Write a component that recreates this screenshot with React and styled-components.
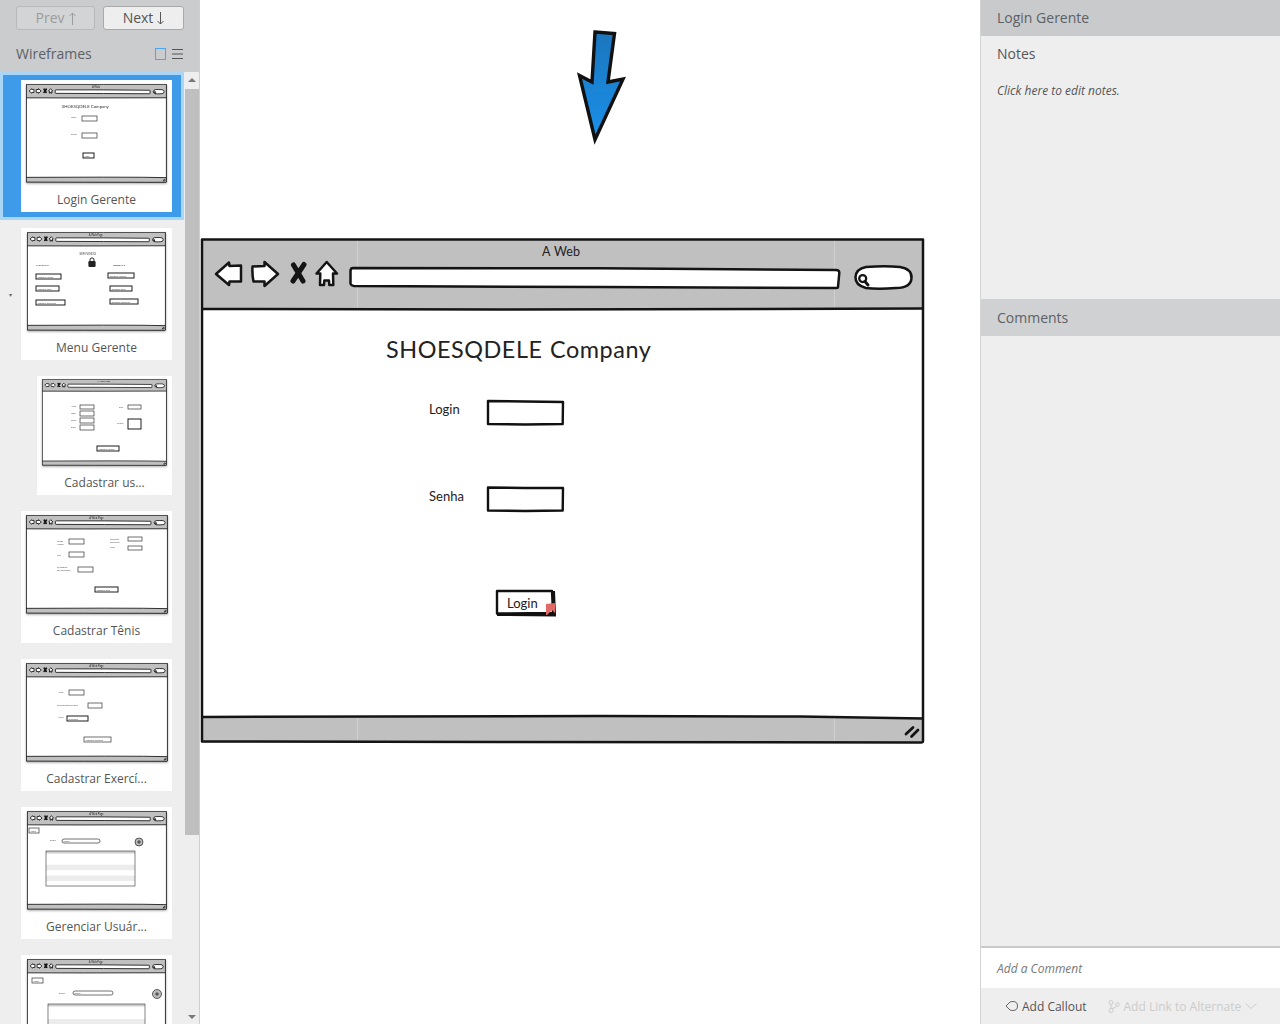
import React from "react";
import styled, { createGlobalStyle } from "styled-components";

// Thumbnail data, coordinates are in thumbnail pixels
const thumbs = [
    {
        name: "Login Gerente",
        title: "A Web",
        w: 141,
        h: 99,
        selected: true,
        texts: [
            { x: 36, y: 23.5, t: "SHOESQDELE Company", s: 4.3, color: "#333" },
            { x: 45, y: 34, t: "Login", s: 2.2 },
            { x: 45, y: 51, t: "Senha", s: 2.2 },
        ],
        boxes: [
            { x: 56, y: 32, w: 15, h: 5 },
            { x: 56, y: 49, w: 15, h: 5 },
            { x: 57, y: 69, w: 11, h: 5, heavy: true, t: "Login" },
        ],
    },
    {
        name: "Menu Gerente",
        title: "A Web Page",
        w: 139,
        h: 99,
        texts: [
            { x: 52.5, y: 23, t: "SEM VINDO", s: 3, color: "#444" },
            { x: 9, y: 34, t: "CADASTRAR", s: 2.2, color: "#222" },
            { x: 86, y: 34, t: "GERENCIAR", s: 2.2, color: "#222" },
        ],
        boxes: [
            { x: 9, y: 42, w: 25, h: 5, heavy: true, t: "Cadastrar usuário" },
            { x: 9, y: 54, w: 23, h: 5, heavy: true, t: "Cadastrar Tênis" },
            { x: 9, y: 68, w: 29, h: 5, heavy: true, t: "Cadastrar Exercícios" },
            { x: 81, y: 41, w: 26, h: 5, heavy: true, t: "Gerenciar usuários" },
            { x: 83, y: 54, w: 22, h: 5, heavy: true, t: "Gerenciar Tênis" },
            { x: 83, y: 67, w: 28, h: 5, heavy: true, t: "Gerenciar exercícios" },
        ],
        lock: { x: 65, y: 31 },
    },
    {
        name: "Cadastrar us...",
        title: "A Web Page",
        w: 125,
        h: 87,
        cardWidth: 135,
        compact: true,
        texts: [
            { x: 29, y: 28, t: "Nome", s: 2 },
            { x: 29, y: 35, t: "Login", s: 2 },
            { x: 29, y: 42, t: "Senha", s: 2 },
            { x: 29, y: 49, t: "Email", s: 2 },
            { x: 77, y: 29, t: "Data", s: 2 },
            { x: 75, y: 45, t: "Função", s: 2 },
        ],
        boxes: [
            { x: 38, y: 26, w: 14, h: 4 },
            { x: 38, y: 32, w: 14, h: 5 },
            { x: 38, y: 39, w: 14, h: 5 },
            { x: 38, y: 46, w: 14, h: 5 },
            { x: 86, y: 26, w: 13, h: 4 },
            { x: 86, y: 40, w: 13, h: 10, heavy: true },
            { x: 55, y: 67, w: 22, h: 5, heavy: true, t: "Cadastrar usuário" },
        ],
    },
    {
        name: "Cadastrar Tênis",
        title: "A Web Page",
        w: 142,
        h: 99,
        texts: [
            { x: 31, y: 27, t: "Código", s: 2 },
            { x: 31, y: 30, t: "Modelo", s: 2 },
            { x: 31, y: 41, t: "Tipo", s: 2 },
            { x: 31, y: 53, t: "Quantidade", s: 2 },
            { x: 31, y: 56, t: "por embalagem", s: 2 },
            { x: 84, y: 25, t: "Tamanhos", s: 2 },
            { x: 84, y: 28, t: "disponíveis", s: 2 },
            { x: 84, y: 33, t: "Preço", s: 2 },
        ],
        boxes: [
            { x: 43, y: 24, w: 15, h: 5 },
            { x: 43, y: 37, w: 15, h: 5 },
            { x: 52, y: 52, w: 15, h: 5 },
            { x: 102, y: 22, w: 14, h: 4 },
            { x: 102, y: 31, w: 14, h: 4 },
            { x: 69, y: 72, w: 23, h: 5, heavy: true, t: "Cadastrar tênis" },
        ],
    },
    {
        name: "Cadastrar Exercí...",
        title: "A Web Page",
        w: 142,
        h: 99,
        texts: [
            { x: 32, y: 30, t: "Nome", s: 2 },
            { x: 31, y: 43, t: "Calorias gastas por hora", s: 2 },
            { x: 32, y: 55, t: "Ativos", s: 2 },
        ],
        boxes: [
            { x: 43, y: 27, w: 15, h: 5 },
            { x: 62, y: 40, w: 14, h: 5 },
            { x: 41, y: 53, w: 21, h: 5, heavy: true, t: "Selecionar" },
            { x: 58, y: 74, w: 27, h: 5, t: "Cadastrar exercício" },
        ],
    },
    {
        name: "Gerenciar Usuár...",
        title: "A Web Page",
        w: 140,
        h: 99,
        texts: [{ x: 23, y: 30, t: "Buscar", s: 2 }],
        boxes: [
            { x: 2, y: 17, w: 10, h: 5, t: "Voltar" },
            { x: 35, y: 28, w: 38, h: 4, round: true, t: "search" },
        ],
        plus: { x: 112, y: 31, r: 4 },
        table: { x: 19, y: 40, w: 89, h: 35, row: 5.4, stripes: [2, 4] },
    },
    {
        // Cut off by the bottom of the list, its label is out of view
        title: "A Web Page",
        w: 139,
        h: 99,
        texts: [{ x: 32, y: 35, t: "Buscar", s: 2 }],
        boxes: [
            { x: 5, y: 19, w: 11, h: 5, t: "Voltar" },
            { x: 46, y: 32, w: 40, h: 4, round: true, t: "search" },
        ],
        plus: { x: 130, y: 35, r: 4.5 },
        table: { x: 21, y: 45, w: 97, h: 45, row: 6, stripes: [2, 4, 6] },
    },
];

const GlobalStyle = createGlobalStyle`
    html, body {
        margin: 0;
        padding: 0;
        height: 100%;
        background: white;
        font-family: "Open Sans", "Liberation Sans", sans-serif;
    }
`;

// Browser chrome of a wireframe, drawn in page coordinates of the main window
const WireChrome = ({ weight = 2.5, title }) => (
    <g fill="none" stroke="#141414" strokeWidth={weight} strokeLinejoin="round">
        <rect x="202" y="239.5" width="721" height="503" fill="#c0c0c0" stroke="none" />
        <path
            d="M202 309 L500 309.6 L923 308.6 L923 717.6 L800 716.6 L600 716 L202 717 Z"
            fill="#fff"
            stroke="none"
        />
        <path d="M357.5 240 V308 M357.5 718 V741 M834.5 240 V308 M834.5 718 V741" stroke="#d0d0d0" strokeWidth="1" />
        <path d="M202 239.5 L600 239.5 L923 239.5 L923 741 Q923 742.5 921 742.5 L500 742 L202 741.5 Z" />
        <path d="M202 309 L500 309.6 L923 308.6" />
        <path d="M202 717 L600 716 L800 716.6 L923 718.5" />
        <g fill="#fff">
            <path d="M216 274 L229 262.5 L229.5 266 L241 265.5 L241 281.5 L229.5 281.5 L229 285 Z" />
            <path d="M252.5 266.5 L264.5 266 L264.5 262 L278 274 L264.5 286 L264.5 281.5 L253.5 281.5 Q252 274 252.5 266.5 Z" />
            <path d="M326.7 262 L337 273.5 L333 273.5 L333.3 285 L329.3 285 L329 280.5 L324.3 280.5 L324 285 L320 285 L320.3 273.5 L316.5 273.5 Z" />
            <path d="M353 268 L600 268.3 L836 270 Q839.5 270 839.3 273 L838 287 Q838 288 836 288 L600 287 L354 286 Q350 285.5 350.5 282 L350.5 271 Q350.5 268 353 268 Z" />
            <path d="M866 267 Q885 265.5 900 267 Q912 269 911.5 278 Q911 288 896 288 Q878 289.5 866 288 Q855 285 855.5 277 Q856 269 866 267 Z" />
        </g>
        <path d="M293.5 265 L303 281 M304 264.5 L293 281" strokeWidth={weight * 2} strokeLinecap="round" />
        <circle cx="862.7" cy="278.5" r="3.5" strokeWidth={weight * 0.9} />
        <path d="M865 281.5 L868 285" strokeWidth={weight * 1.2} strokeLinecap="round" />
        <path d="M906 734 L913 727.5 M911.5 736.5 L918 730" strokeWidth={weight * 1.1} strokeLinecap="round" />
        {title && (
            <text x="560" y="257" textAnchor="middle" fontFamily="Lato, sans-serif" fontSize="14" stroke="none" fill="#222">
                {title}
            </text>
        )}
    </g>
);

// Everything inside one thumbnail, laid out in thumbnail pixels
const ThumbContent = ({ item }) => (
    <g transform={`translate(200 238) scale(${726 / item.w} ${508 / item.h})`} fontFamily="Lato, sans-serif">
        {item.table && (
            <g>
                <rect x={item.table.x} y={item.table.y} width={item.table.w} height={item.table.h} fill="#fff" />
                <rect x={item.table.x} y={item.table.y} width={item.table.w} height="2.5" fill="#cfcfcf" />
                {item.table.stripes.map((i) => (
                    <rect
                        key={i}
                        x={item.table.x}
                        y={item.table.y + 3 + i * item.table.row}
                        width={item.table.w}
                        height={item.table.row}
                        fill="#ececec"
                    />
                ))}
                <rect x={item.table.x} y={item.table.y} width={item.table.w} height={item.table.h} fill="none" stroke="#333" strokeWidth="0.6" />
            </g>
        )}
        {item.boxes.map((b) => (
            <g key={`${b.x}-${b.y}`}>
                <rect
                    x={b.x}
                    y={b.y}
                    width={b.w}
                    height={b.h}
                    rx={b.round ? 2 : 0}
                    fill="#fff"
                    stroke={b.heavy ? "#111" : "#333"}
                    strokeWidth={b.heavy ? 0.95 : 0.7}
                />
                {b.t && (
                    <text x={b.x + 1.5} y={b.y + b.h - 1.3} fontSize="2.1" fill="#444">
                        {b.t}
                    </text>
                )}
            </g>
        ))}
        {item.texts.map((t) => (
            <text key={`${t.x}-${t.y}`} x={t.x} y={t.y} fontSize={t.s} fill={t.color || "#555"}>
                {t.t}
            </text>
        ))}
        {item.lock && (
            <g>
                <circle cx={item.lock.x} cy={item.lock.y - 3} r="2.1" fill="none" stroke="#222" strokeWidth="1" />
                <rect x={item.lock.x - 3.6} y={item.lock.y - 2} width="7.2" height="6" rx="1.2" fill="#222" />
            </g>
        )}
        {item.plus && (
            <g>
                <circle cx={item.plus.x} cy={item.plus.y} r={item.plus.r} fill="#bbb" stroke="#222" strokeWidth="0.7" />
                <path
                    d={`M${item.plus.x - 2} ${item.plus.y} H${item.plus.x + 2} M${item.plus.x} ${item.plus.y - 2} V${item.plus.y + 2}`}
                    stroke="#111"
                    strokeWidth="0.7"
                />
            </g>
        )}
    </g>
);

const ThumbRow = ({ item }) => (
    <Row $selected={item.selected}>
        <Card $width={item.cardWidth} $compact={item.compact}>
            <ThumbImage viewBox="200 238 726 508" preserveAspectRatio="none" width={item.w} height={item.h}>
                <WireChrome weight={4.4} title={item.title} />
                <ThumbContent item={item} />
            </ThumbImage>
            {item.name && <CardLabel>{item.name}</CardLabel>}
        </Card>
    </Row>
);

// Thin arrow next to the Prev and Next captions
const NavArrow = ({ up, color }) => (
    <svg width="7" height="13" viewBox="0 0 7 13">
        <path
            d={up ? "M3.5 13V1M0.5 4L3.5 1L6.5 4" : "M3.5 0V12M0.5 9L3.5 12L6.5 9"}
            fill="none"
            stroke={color}
            strokeWidth="1"
        />
    </svg>
);

const App = () => {
    return (
        <Page>
            <GlobalStyle />
            <Sidebar>
                <SideHead>
                    <NavButtons>
                        <NavButton $disabled>
                            Prev <NavArrow up color="#9b9c9d" />
                        </NavButton>
                        <NavButton>
                            Next <NavArrow color="#555555" />
                        </NavButton>
                    </NavButtons>
                    <SideTitleRow>
                        <SideTitle>Wireframes</SideTitle>
                        <ViewIcons>
                            <GridIcon />
                            <svg width="11" height="12" viewBox="0 0 11 12">
                                <path d="M0 1.5H11M0 6H11M0 10.5H11" stroke="#555" strokeWidth="1" />
                            </svg>
                        </ViewIcons>
                    </SideTitleRow>
                </SideHead>
                <SideBody>
                    <ThumbList>
                        {thumbs.map((item, i) => (
                            <ThumbRow key={i} item={item} />
                        ))}
                        <Caret>▾</Caret>
                    </ThumbList>
                    <Scrollbar>
                        <ScrollArrow $up />
                        <ScrollThumb />
                        <ScrollSpace />
                        <ScrollArrow />
                    </Scrollbar>
                </SideBody>
            </Sidebar>

            <Canvas>
                <BlueArrow width="80" height="130" viewBox="560 20 80 130">
                    <defs>
                        <linearGradient id="arrowFill" x1="0" y1="0" x2="0" y2="1">
                            <stop offset="0" stopColor="#1b76bd" />
                            <stop offset="1" stopColor="#1a90ea" />
                        </linearGradient>
                    </defs>
                    <path
                        d="M595 32 L614.5 33.5 L608 82 L623 79 L595 139.5 L579.5 75.5 L592 82 Z"
                        fill="url(#arrowFill)"
                        stroke="#111"
                        strokeWidth="3.4"
                    />
                </BlueArrow>

                <WireWindow>
                    <WireSvg viewBox="200 238 726 508" width="726" height="508">
                        <WireChrome />
                        <g fill="#fff" stroke="#111" strokeWidth="2.4" strokeLinejoin="round">
                            <path d="M488 401 L525 401.5 L563 402 L562.7 424 L525 424.5 L488 424 Z" />
                            <path d="M488 487.5 L525 488 L563 488 L562.7 510.5 L525 511 L488 510.5 Z" />
                            <path d="M497 591 L552 591 L553 613 L497 613.5 Z" />
                        </g>
                        <path d="M553.5 591 L554.5 615 L497 614.5" fill="none" stroke="#111" strokeWidth="3" />
                        <path d="M546 604 L555 603 L555 613 L552 610 L547 615 L546 615 Z" fill="#e06a66" />
                    </WireSvg>
                    <WireText $x={342} $y={14} $size={12.5}>A Web</WireText>
                    <WireText $x={186} $y={111} $size={23.4} $spacing={0.55}>SHOESQDELE Company</WireText>
                    <WireText $x={229} $y={171} $size={13}>Login</WireText>
                    <WireText $x={229} $y={258} $size={13}>Senha</WireText>
                    <WireText $x={307} $y={365} $size={13}>Login</WireText>
                </WireWindow>
            </Canvas>

            <RightPanel>
                <PanelBar>Login Gerente</PanelBar>
                <NotesTitle>Notes</NotesTitle>
                <NotesText>Click here to edit notes.</NotesText>
                <PanelBar $comments>Comments</PanelBar>
                <PanelSpace />
                <CommentInput>Add a Comment</CommentInput>
                <PanelActions>
                    <ActionItem>
                        <svg width="13" height="12" viewBox="0 0 13 12">
                            <path d="M1 6 L5 2 Q6 1.5 8 1.5 Q12.5 1.5 12.5 6 Q12.5 10.5 8 10.5 Q6 10.5 5 10 Z" fill="none" stroke="#666" />
                        </svg>
                        Add Callout
                    </ActionItem>
                    <ActionItem $disabled>
                        <svg width="12" height="13" viewBox="0 0 12 13">
                            <g fill="none" stroke="#ccc">
                                <circle cx="3" cy="2.5" r="2" />
                                <circle cx="3" cy="10.5" r="2" />
                                <circle cx="9.5" cy="4.5" r="1.7" />
                                <path d="M3 4.5V8.5M4 8.5 Q8 8 8.5 6" />
                            </g>
                        </svg>
                        Add Link to Alternate
                        <svg width="12" height="6" viewBox="0 0 12 6">
                            <path d="M0.5 0.5 L6 5.5 L11.5 0.5" fill="none" stroke="#ccc" />
                        </svg>
                    </ActionItem>
                </PanelActions>
            </RightPanel>
        </Page>
    );
};

const Page = styled.div`
    display: flex;
    width: 1280px;
    height: 1024px;
    overflow: hidden;
    background: white;
`;

const Sidebar = styled.aside`
    width: 200px;
    flex-shrink: 0;
    display: flex;
    flex-direction: column;
    background: #eeeeee;
    box-sizing: border-box;
    border-right: 1px solid #cfcfcf;
`;

const SideHead = styled.div`
    height: 72px;
    flex-shrink: 0;
    background: #cbcccd;
    padding: 6px 15px 0 16px;
    box-sizing: border-box;
`;

const NavButtons = styled.div`
    display: flex;
    gap: 8px;
`;

const NavButton = styled.div`
    flex: ${(p) => (p.$disabled ? "0 0 79px" : "0 0 81px")};
    height: 24px;
    box-sizing: border-box;
    display: flex;
    align-items: center;
    justify-content: center;
    gap: 4px;
    padding-bottom: 2px;
    font-size: 14px;
    border-radius: 3px;
    border: 1px solid ${(p) => (p.$disabled ? "#b8b9ba" : "#a9a9a9")};
    background: ${(p) => (p.$disabled ? "#d3d4d5" : "#eeeeee")};
    color: ${(p) => (p.$disabled ? "#9b9c9d" : "#555555")};

    svg {
        margin-top: 2px;
    }
`;

const SideTitleRow = styled.div`
    display: flex;
    align-items: center;
    justify-content: space-between;
    margin-top: 14px;
    height: 20px;
`;

const SideTitle = styled.div`
    font-size: 14px;
    color: #5b6167;
    margin-top: -2px;
`;

const ViewIcons = styled.div`
    display: flex;
    align-items: center;
    gap: 6px;
    margin-right: 1px;
`;

const GridIcon = styled.div`
    width: 11px;
    height: 12px;
    box-sizing: border-box;
    border: 1.5px solid #4aa5f5;
`;

const SideBody = styled.div`
    flex: 1;
    min-height: 0;
    display: flex;
`;

const ThumbList = styled.div`
    position: relative;
    width: 185px;
    flex-shrink: 0;
    overflow: hidden;
`;

const Row = styled.div`
    display: flex;
    justify-content: flex-end;
    width: 184px;
    box-sizing: border-box;
    padding: 5px 9px 5px 0;
    border: 3px solid ${(p) => (p.$selected ? "#a9d5f7" : "transparent")};
    background: ${(p) => (p.$selected ? "#3d9be9" : "transparent")};
    background-clip: padding-box;
`;

const Card = styled.div`
    width: ${(p) => p.$width || 151}px;
    box-sizing: border-box;
    background: white;
    display: flex;
    flex-direction: column;
    align-items: center;
    padding-top: ${(p) => (p.$compact ? 3 : 4)}px;
`;

const ThumbImage = styled.svg`
    display: block;
    flex-shrink: 0;
    filter: blur(0.25px) drop-shadow(0 1px 1px rgba(0, 0, 0, 0.35));
`;

const CardLabel = styled.div`
    height: 29px;
    line-height: 34px;
    font-size: 12px;
    color: #555555;
    white-space: nowrap;
`;

const Caret = styled.div`
    position: absolute;
    left: 9px;
    top: 219px;
    font-size: 6px;
    line-height: 8px;
    color: #666;
`;

const Scrollbar = styled.div`
    width: 14px;
    display: flex;
    flex-direction: column;
`;

const ScrollArrow = styled.div`
    height: 17px;
    flex-shrink: 0;
    position: relative;

    &::after {
        content: "";
        position: absolute;
        left: 3px;
        top: ${(p) => (p.$up ? "6px" : "8px")};
        border-left: 4px solid transparent;
        border-right: 4px solid transparent;
        border-${(p) => (p.$up ? "bottom" : "top")}: 4px solid #777;
    }
`;

const ScrollThumb = styled.div`
    height: 746px;
    background: #bfbfbf;
`;

const ScrollSpace = styled.div`
    flex: 1;
`;

const Canvas = styled.main`
    position: relative;
    flex: 1;
    overflow: hidden;
    background: white;
`;

const BlueArrow = styled.svg`
    position: absolute;
    left: 360px;
    top: 20px;
`;

const WireWindow = styled.div`
    position: absolute;
    left: 0;
    top: 238px;
    width: 726px;
    height: 508px;
    font-family: Lato, "Open Sans", sans-serif;
`;

const WireSvg = styled.svg`
    display: block;
`;

const WireText = styled.div`
    position: absolute;
    left: ${(p) => p.$x}px;
    top: ${(p) => p.$y - Math.round(p.$size * 0.6)}px;
    font-size: ${(p) => p.$size}px;
    line-height: ${(p) => Math.round(p.$size * 1.2)}px;
    letter-spacing: ${(p) => p.$spacing || 0}px;
    word-spacing: 1px;
    color: #222;
    white-space: nowrap;
`;

const RightPanel = styled.aside`
    width: 300px;
    flex-shrink: 0;
    display: flex;
    flex-direction: column;
    box-sizing: border-box;
    border-left: 1px solid #d4d4d4;
    background: #eeeeee;
`;

const PanelBar = styled.div`
    height: ${(p) => (p.$comments ? "37px" : "36px")};
    flex-shrink: 0;
    box-sizing: border-box;
    display: flex;
    align-items: center;
    padding-left: 16px;
    padding-bottom: ${(p) => (p.$comments ? "0" : "2px")};
    font-size: 14px;
    color: #5b6167;
    background: ${(p) => (p.$comments ? "#d0d1d2" : "#c9cacb")};
`;

const NotesTitle = styled.div`
    margin-top: 8px;
    padding-left: 16px;
    height: 20px;
    line-height: 20px;
    font-size: 14px;
    color: #555555;
`;

const NotesText = styled.div`
    margin-top: 18px;
    padding-left: 16px;
    height: 217px;
    line-height: 18px;
    font-size: 12px;
    font-style: italic;
    color: #555555;
`;

const PanelSpace = styled.div`
    flex: 1;
`;

const CommentInput = styled.div`
    height: 40px;
    flex-shrink: 0;
    border-top: 2px solid #c8c8c8;
    background: white;
    display: flex;
    align-items: center;
    padding-left: 16px;
    font-size: 12px;
    font-style: italic;
    color: #777777;
`;

const PanelActions = styled.div`
    height: 36px;
    flex-shrink: 0;
    display: flex;
    align-items: center;
    gap: 21px;
    padding-left: 24px;
`;

const ActionItem = styled.div`
    display: flex;
    align-items: center;
    gap: 4px;
    font-size: 12px;
    color: ${(p) => (p.$disabled ? "#cccccc" : "#555555")};
`;

export default App;
